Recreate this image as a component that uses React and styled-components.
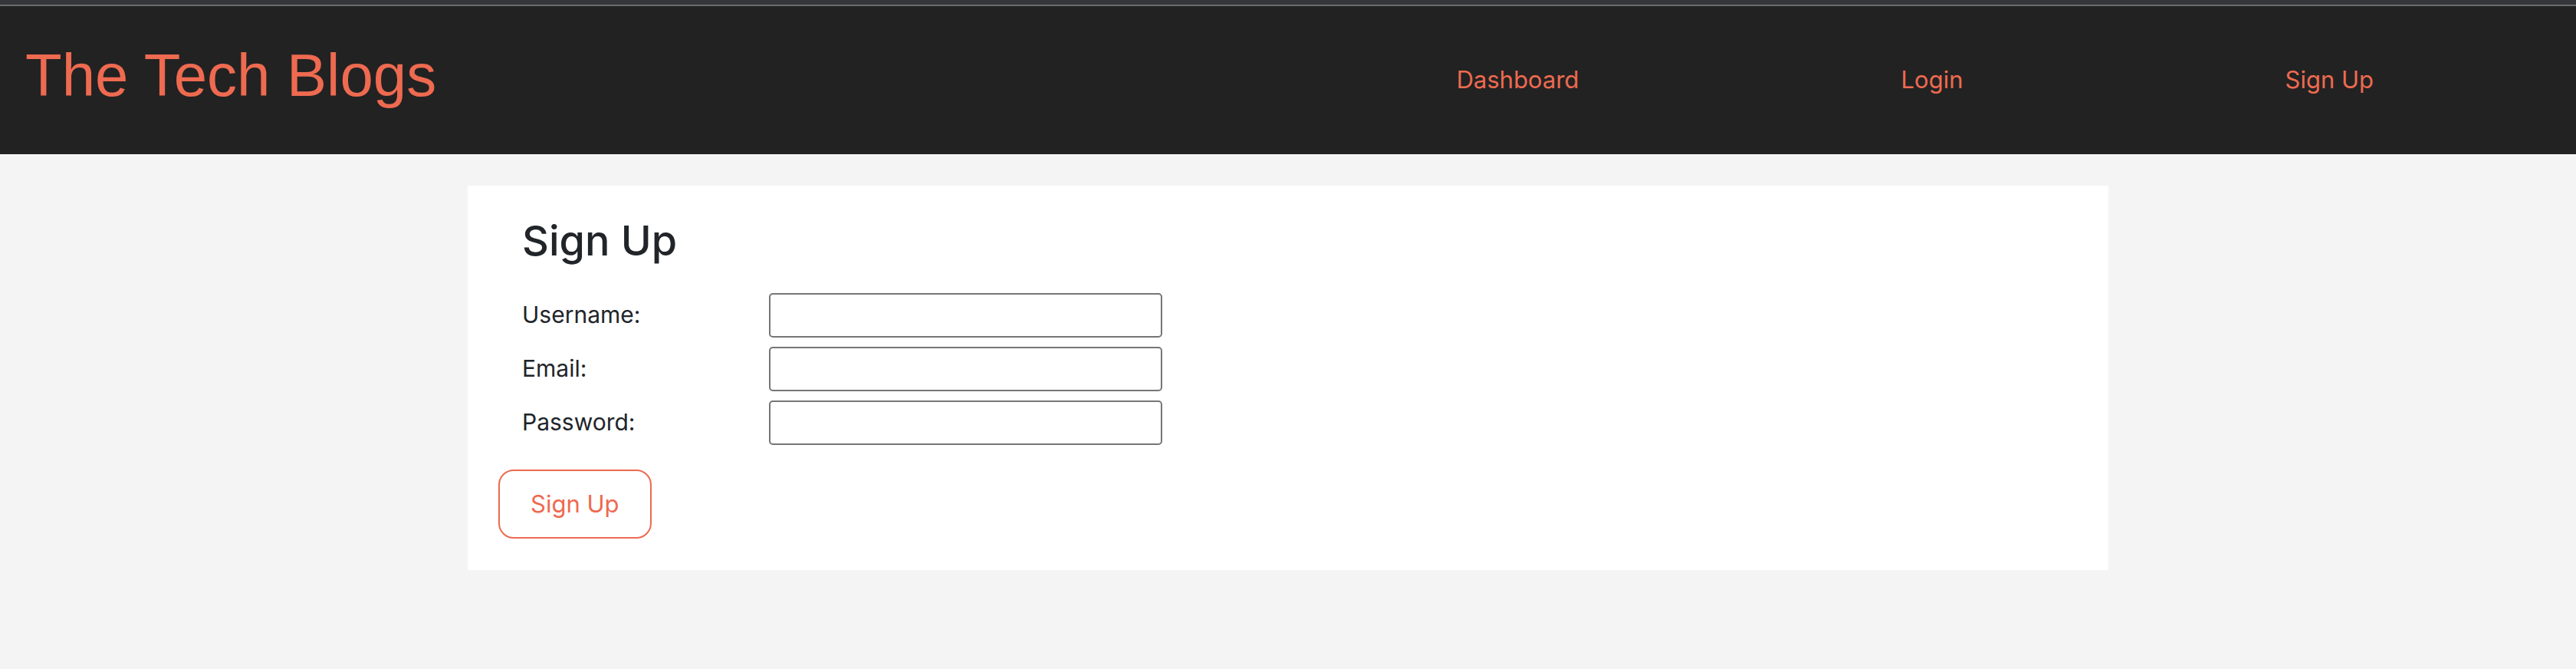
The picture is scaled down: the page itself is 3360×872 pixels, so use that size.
import React from "react";
import styled, { createGlobalStyle } from "styled-components";

const GlobalStyle = createGlobalStyle`
  html, body {
    margin: 0;
    padding: 0;
    background: #f4f4f4;
    font-family: Inter, "Liberation Sans", Arial, sans-serif;
    color: #212529;
  }
  * { box-sizing: border-box; }
`;

const TopStrip = styled.div`
  height: 8px;
  background: #35363a;
  border-bottom: 2px solid #6b6b6f;
`;

const Header = styled.header`
  height: 193px;
  background: #222222;
  display: flex;
  align-items: center;
  padding-left: 33px;
  padding-right: 264px;
`;

const Brand = styled.h1`
  margin: 0 0 12px 0;
  font-family: "Liberation Sans", Arial, sans-serif;
  font-weight: 400;
  font-size: 78px;
  letter-spacing: 0;
  line-height: 1.2;
  color: #ee6a50;
`;

const Nav = styled.nav`
  margin-left: auto;
  display: flex;
  align-items: center;
  gap: 420px;
`;

const NavLink = styled.a`
  font-size: 31px;
  line-height: 1.5;
  color: #ee6a50;
  text-decoration: none;
`;

const Main = styled.main`
  padding-top: 41px;
`;

const Card = styled.section`
  width: 2140px;
  margin: 0 auto;
  background: #ffffff;
  padding: 40px 40px 41px 40px;
`;

const Title = styled.h2`
  margin: 0 0 35px 31px;
  font-size: 54px;
  font-weight: 500;
  line-height: 1.2;
  color: #212529;
`;

const Form = styled.form`
  display: flex;
  flex-direction: column;
  align-items: flex-start;
`;

const Fields = styled.div`
  display: grid;
  grid-template-columns: 322px 513px;
  row-gap: 12px;
  align-items: center;
  margin-left: 31px;
`;

const Label = styled.label`
  font-size: 30px;
  line-height: 1.5;
  color: #212529;
`;

const Input = styled.input`
  height: 58px;
  width: 513px;
  border: 2px solid #767676;
  border-radius: 5px;
  background: #fff;
  padding: 0 6px;
  font-size: 28px;
  font-family: inherit;
`;

const Button = styled.button`
  margin-top: 32px;
  height: 90px;
  padding: 0 40px;
  border: 2px solid #ee6a50;
  border-radius: 20px;
  background: #fff;
  color: #ee6a50;
  font-family: inherit;
  font-size: 31px;
  cursor: pointer;
`;

export default function App() {
  return (
    <>
      <GlobalStyle />
      <TopStrip />
      <Header>
        <Brand>The Tech Blogs</Brand>
        <Nav>
          <NavLink href="#">Dashboard</NavLink>
          <NavLink href="#">Login</NavLink>
          <NavLink href="#">Sign Up</NavLink>
        </Nav>
      </Header>
      <Main>
        <Card>
          <Title>Sign Up</Title>
          <Form onSubmit={(e) => e.preventDefault()}>
            <Fields>
              <Label htmlFor="username">Username:</Label>
              <Input id="username" type="text" />
              <Label htmlFor="email">Email:</Label>
              <Input id="email" type="email" />
              <Label htmlFor="password">Password:</Label>
              <Input id="password" type="password" />
            </Fields>
            <Button type="submit">Sign Up</Button>
          </Form>
        </Card>
      </Main>
    </>
  );
}
